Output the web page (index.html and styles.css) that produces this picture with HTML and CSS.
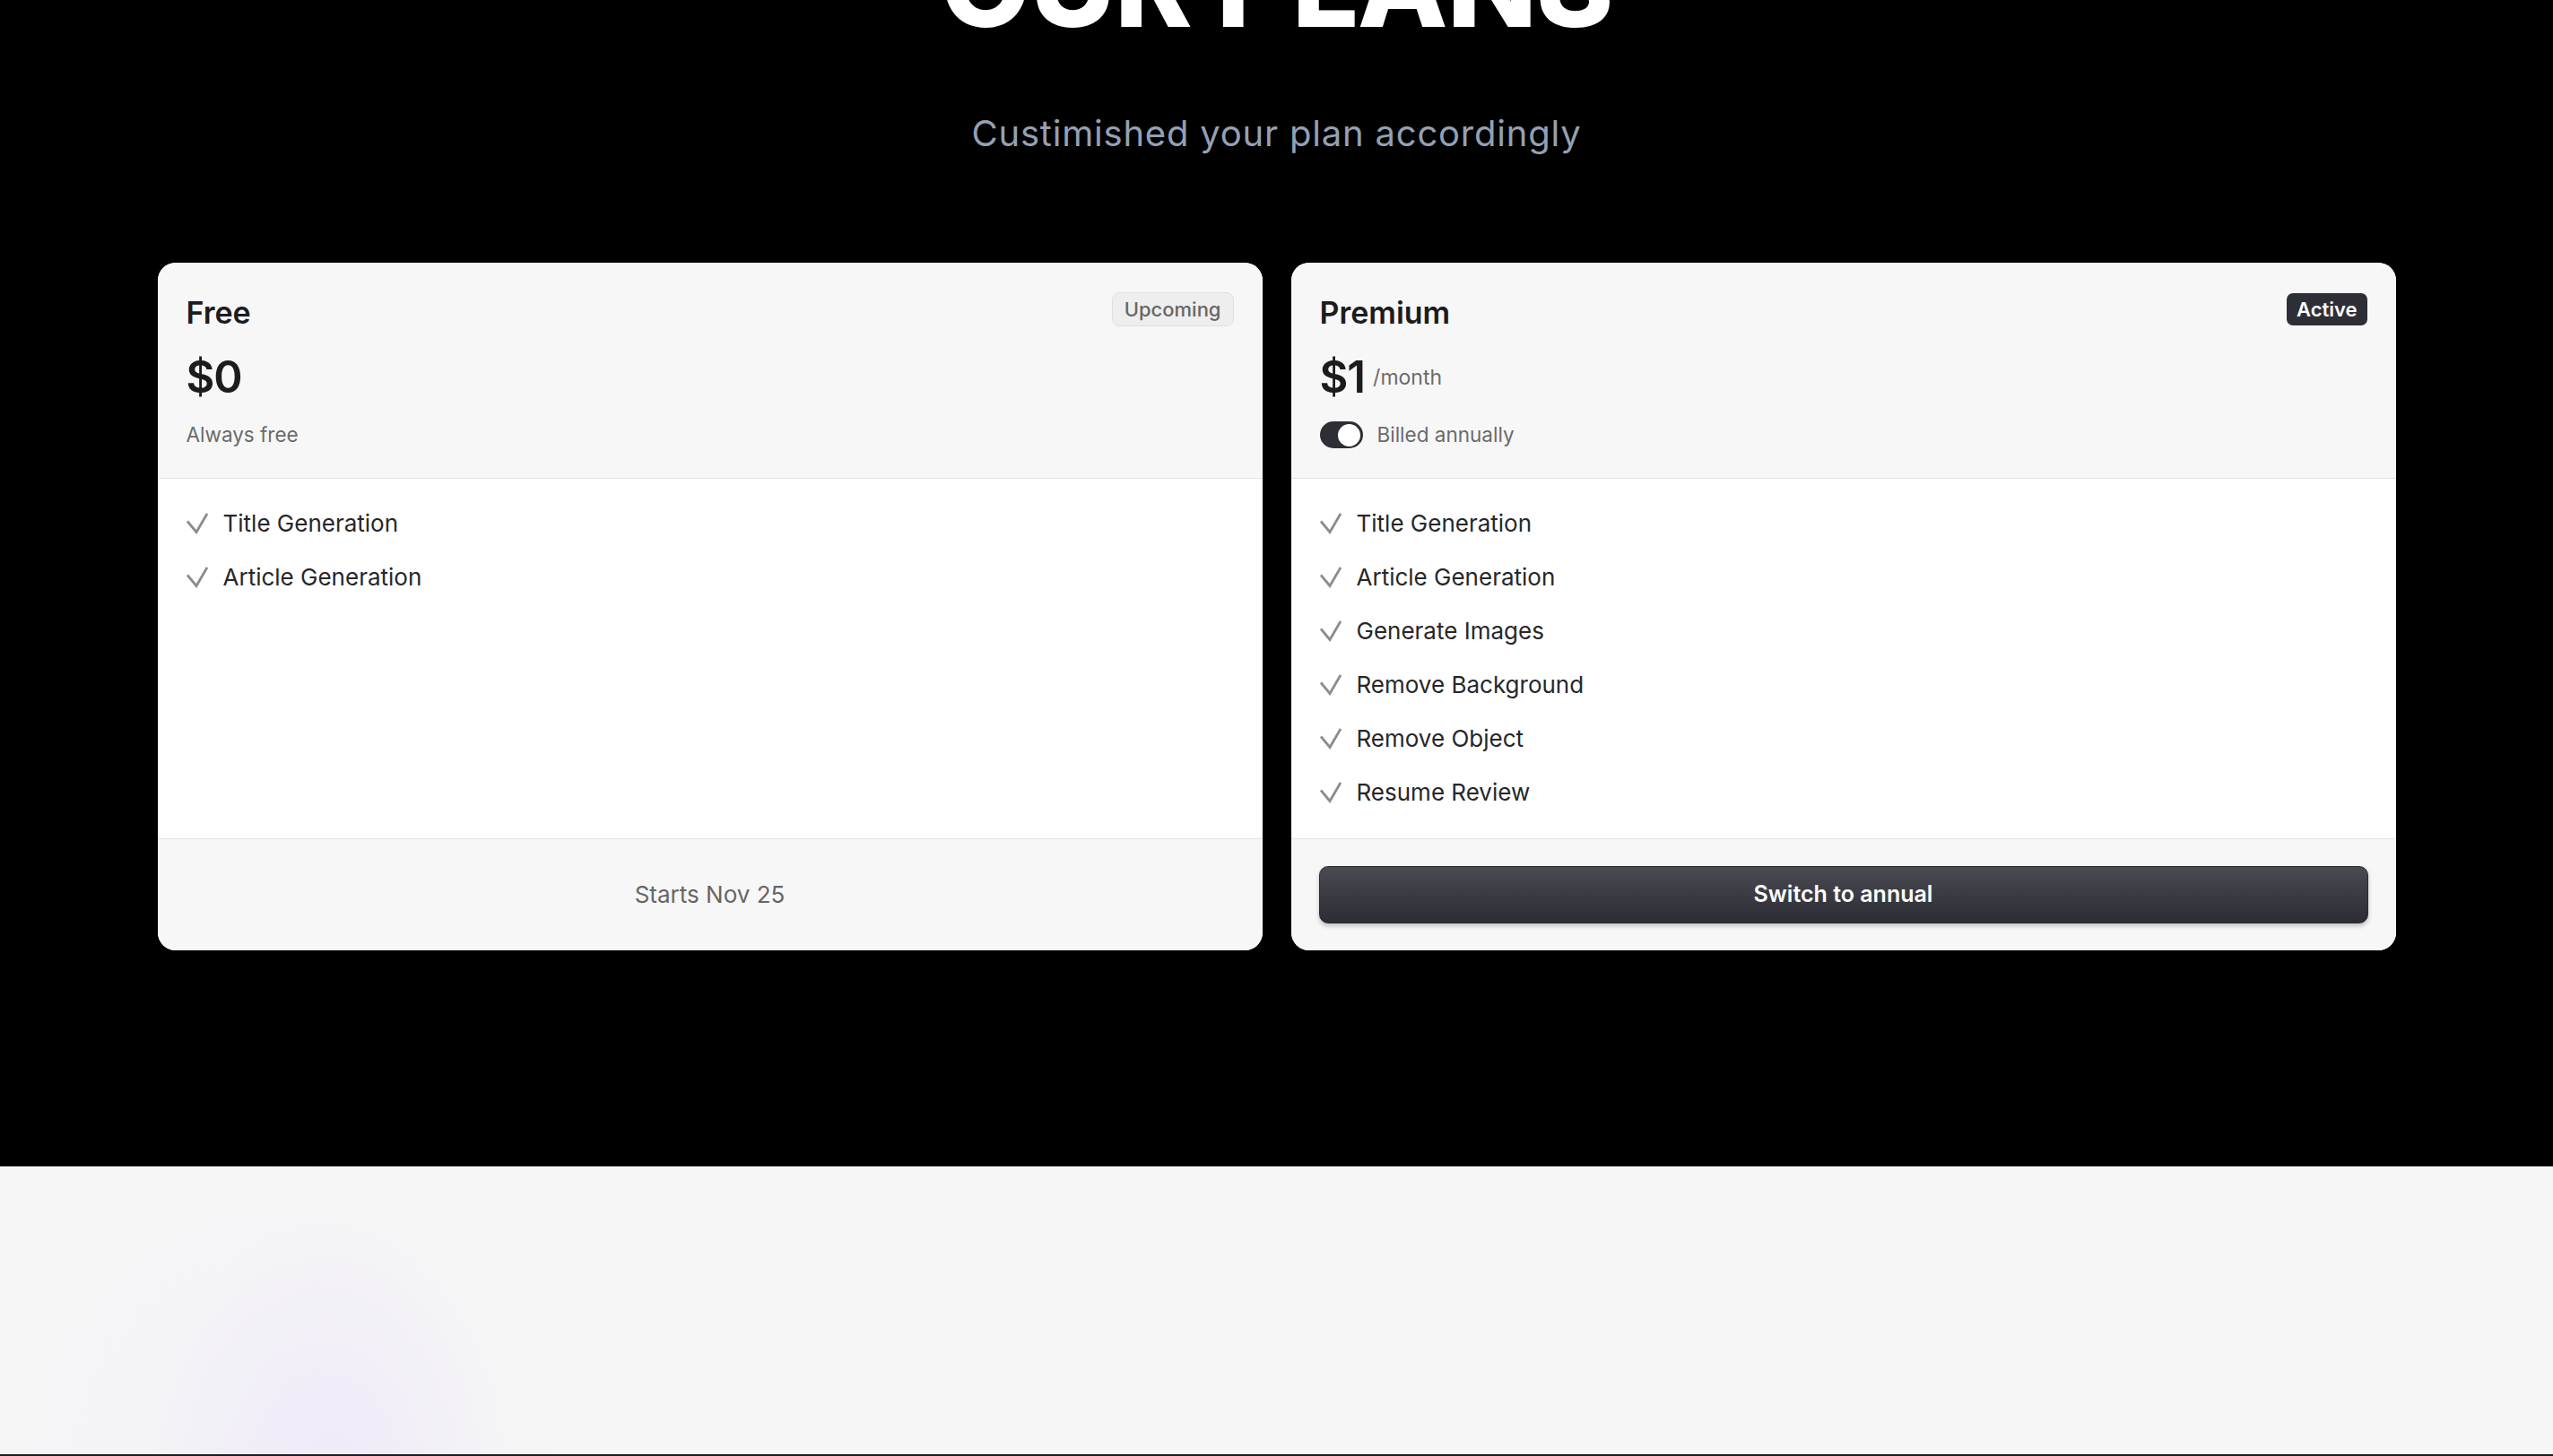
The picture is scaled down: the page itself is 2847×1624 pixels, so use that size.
FILE: index.html
```html
<!DOCTYPE html>
<html lang="en">
<head>
<meta charset="utf-8">
<title>Our Plans</title>
<link rel="stylesheet" href="styles.css">
</head>
<body>
<section class="plans">
  <h1 class="plans-title">OUR PLANS</h1>
  <p class="plans-sub">Custimished your plan accordingly</p>
  <div class="plans-grid">
    <article class="card">
      <header class="card-head">
        <div class="head-row">
          <h2 class="plan-name">Free</h2>
          <span class="badge badge-light">Upcoming</span>
        </div>
        <div class="price-row"><span class="price">$0</span></div>
        <div class="sub-row"><span class="sub-text">Always free</span></div>
      </header>
      <ul class="features">
        <li><svg class="check" viewBox="0 0 24 24"><polyline points="1 9.5 11 21.5 23 1"/></svg><span>Title Generation</span></li>
        <li><svg class="check" viewBox="0 0 24 24"><polyline points="1 9.5 11 21.5 23 1"/></svg><span>Article Generation</span></li>
      </ul>
      <footer class="card-foot">
        <span class="starts">Starts Nov 25</span>
      </footer>
    </article>
    <article class="card">
      <header class="card-head">
        <div class="head-row">
          <h2 class="plan-name">Premium</h2>
          <span class="badge badge-dark">Active</span>
        </div>
        <div class="price-row"><span class="price">$1</span><span class="per">/month</span></div>
        <div class="sub-row">
          <span class="toggle"><span class="knob"></span></span>
          <span class="sub-text">Billed annually</span>
        </div>
      </header>
      <ul class="features">
        <li><svg class="check" viewBox="0 0 24 24"><polyline points="1 9.5 11 21.5 23 1"/></svg><span>Title Generation</span></li>
        <li><svg class="check" viewBox="0 0 24 24"><polyline points="1 9.5 11 21.5 23 1"/></svg><span>Article Generation</span></li>
        <li><svg class="check" viewBox="0 0 24 24"><polyline points="1 9.5 11 21.5 23 1"/></svg><span>Generate Images</span></li>
        <li><svg class="check" viewBox="0 0 24 24"><polyline points="1 9.5 11 21.5 23 1"/></svg><span>Remove Background</span></li>
        <li><svg class="check" viewBox="0 0 24 24"><polyline points="1 9.5 11 21.5 23 1"/></svg><span>Remove Object</span></li>
        <li><svg class="check" viewBox="0 0 24 24"><polyline points="1 9.5 11 21.5 23 1"/></svg><span>Resume Review</span></li>
      </ul>
      <footer class="card-foot">
        <button class="btn-switch" type="button">Switch to annual</button>
      </footer>
    </article>
  </div>
</section>
<section class="next-section"></section>
<div class="dark-strip"></div>
</body>
</html>
```

FILE: styles.css
```css
* { box-sizing: border-box; }

html, body {
  margin: 0;
  padding: 0;
}

body {
  background: #000;
  font-family: Inter, "Noto Sans", "Liberation Sans", sans-serif;
  color: #1c1c1e;
  overflow: hidden;
}

.plans {
  background: #000;
  padding-bottom: 241px;
  display: flex;
  flex-direction: column;
  align-items: center;
}

.plans-title {
  margin: -83px 0 0;
  font-size: 131px;
  line-height: 131px;
  font-weight: 800;
  color: #fff;
  letter-spacing: -1px;
}

.plans-sub {
  margin: 75px 0 0;
  font-size: 40px;
  line-height: 52px;
  font-weight: 400;
  letter-spacing: 0.8px;
  color: #94a0b4;
}

.plans-grid {
  margin-top: 118px;
  width: 2496px;
  display: grid;
  grid-template-columns: 1fr 1fr;
  gap: 32px;
}

.card {
  background: #fff;
  border-radius: 20px;
  overflow: hidden;
  display: flex;
  flex-direction: column;
}

.card-head {
  background: #f7f7f7;
  padding: 32px 32px 32px 32px;
  border-bottom: 1px solid #e4e4e4;
}

.head-row {
  display: flex;
  justify-content: space-between;
  align-items: flex-start;
  height: 50px;
}

.plan-name {
  margin: 0;
  font-size: 34px;
  line-height: 48px;
  font-weight: 600;
  color: #1c1c1e;
}

.badge {
  display: inline-flex;
  align-items: center;
  font-size: 22px;
  border-radius: 8px;
  margin-top: 1px;
}

.badge-light {
  height: 38px;
  padding: 0 13px;
  background: #eeeeee;
  border: 1px solid #e0e0e0;
  color: #666;
  font-weight: 500;
}

.badge-dark {
  height: 36px;
  padding: 0 11px;
  background: #2e2f36;
  color: #fff;
  font-weight: 600;
  border-radius: 7px;
  margin-top: 2px;
}

.price-row {
  margin-top: 23px;
  display: flex;
  align-items: flex-end;
  height: 46px;
}

.price {
  font-size: 49px;
  line-height: 46px;
  font-weight: 600;
  color: #1c1c1e;
  letter-spacing: -1px;
}

.per {
  font-size: 23px;
  line-height: 26px;
  color: #6b6b6b;
  margin-left: 9px;
  margin-bottom: 10px;
}

.sub-row {
  margin-top: 25px;
  height: 32px;
  display: flex;
  align-items: center;
  gap: 16px;
}

.sub-text {
  font-size: 22.5px;
  line-height: 30px;
  color: #6b6b6b;
}

.toggle {
  width: 48px;
  height: 30px;
  border-radius: 15px;
  background: #2e2f36;
  display: flex;
  align-items: center;
  justify-content: flex-end;
  padding: 0 3px;
}

.knob {
  width: 25px;
  height: 25px;
  border-radius: 50%;
  background: #fff;
}

.features {
  flex: 1;
  list-style: none;
  margin: 0;
  padding: 32px 32px 33px;
  display: flex;
  flex-direction: column;
  gap: 24px;
  background: #fff;
}

.features li {
  display: flex;
  align-items: center;
  gap: 17px;
  font-size: 26px;
  line-height: 36px;
  color: #27272a;
}

.check {
  width: 24px;
  height: 24px;
  flex: none;
}

.check polyline {
  fill: none;
  stroke: #8c8c8c;
  stroke-width: 2.8;
  stroke-linejoin: miter;
}

.card-foot {
  background: #f7f7f7;
  border-top: 1px solid #e4e4e4;
  padding: 30px 31px 30px;
  min-height: 125px;
  display: flex;
  align-items: center;
  justify-content: center;
}

.starts {
  font-size: 26px;
  line-height: 36px;
  color: #666;
}

.btn-switch {
  width: 100%;
  height: 64px;
  border-radius: 10px;
  border: 1px solid #2a2b31;
  background: linear-gradient(180deg, #4a4b52 0%, #2c2d34 100%);
  box-shadow: 0 3px 5px rgba(0, 0, 0, 0.22);
  color: #fff;
  font-family: Inter, "Noto Sans", "Liberation Sans", sans-serif;
  font-size: 25px;
  font-weight: 600;
  padding: 0 0 2px;
  cursor: pointer;
}

.next-section {
  height: 321px;
  background:
    radial-gradient(ellipse 200px 300px at 370px 110%, rgba(238, 232, 250, 0.8), rgba(246, 246, 246, 0) 100%),
    radial-gradient(ellipse 380px 460px at 300px 115%, rgba(241, 238, 247, 0.6), rgba(246, 246, 246, 0) 100%),
    #f6f6f6;
}

.dark-strip {
  height: 40px;
  background: #1e1e22;
}
```
